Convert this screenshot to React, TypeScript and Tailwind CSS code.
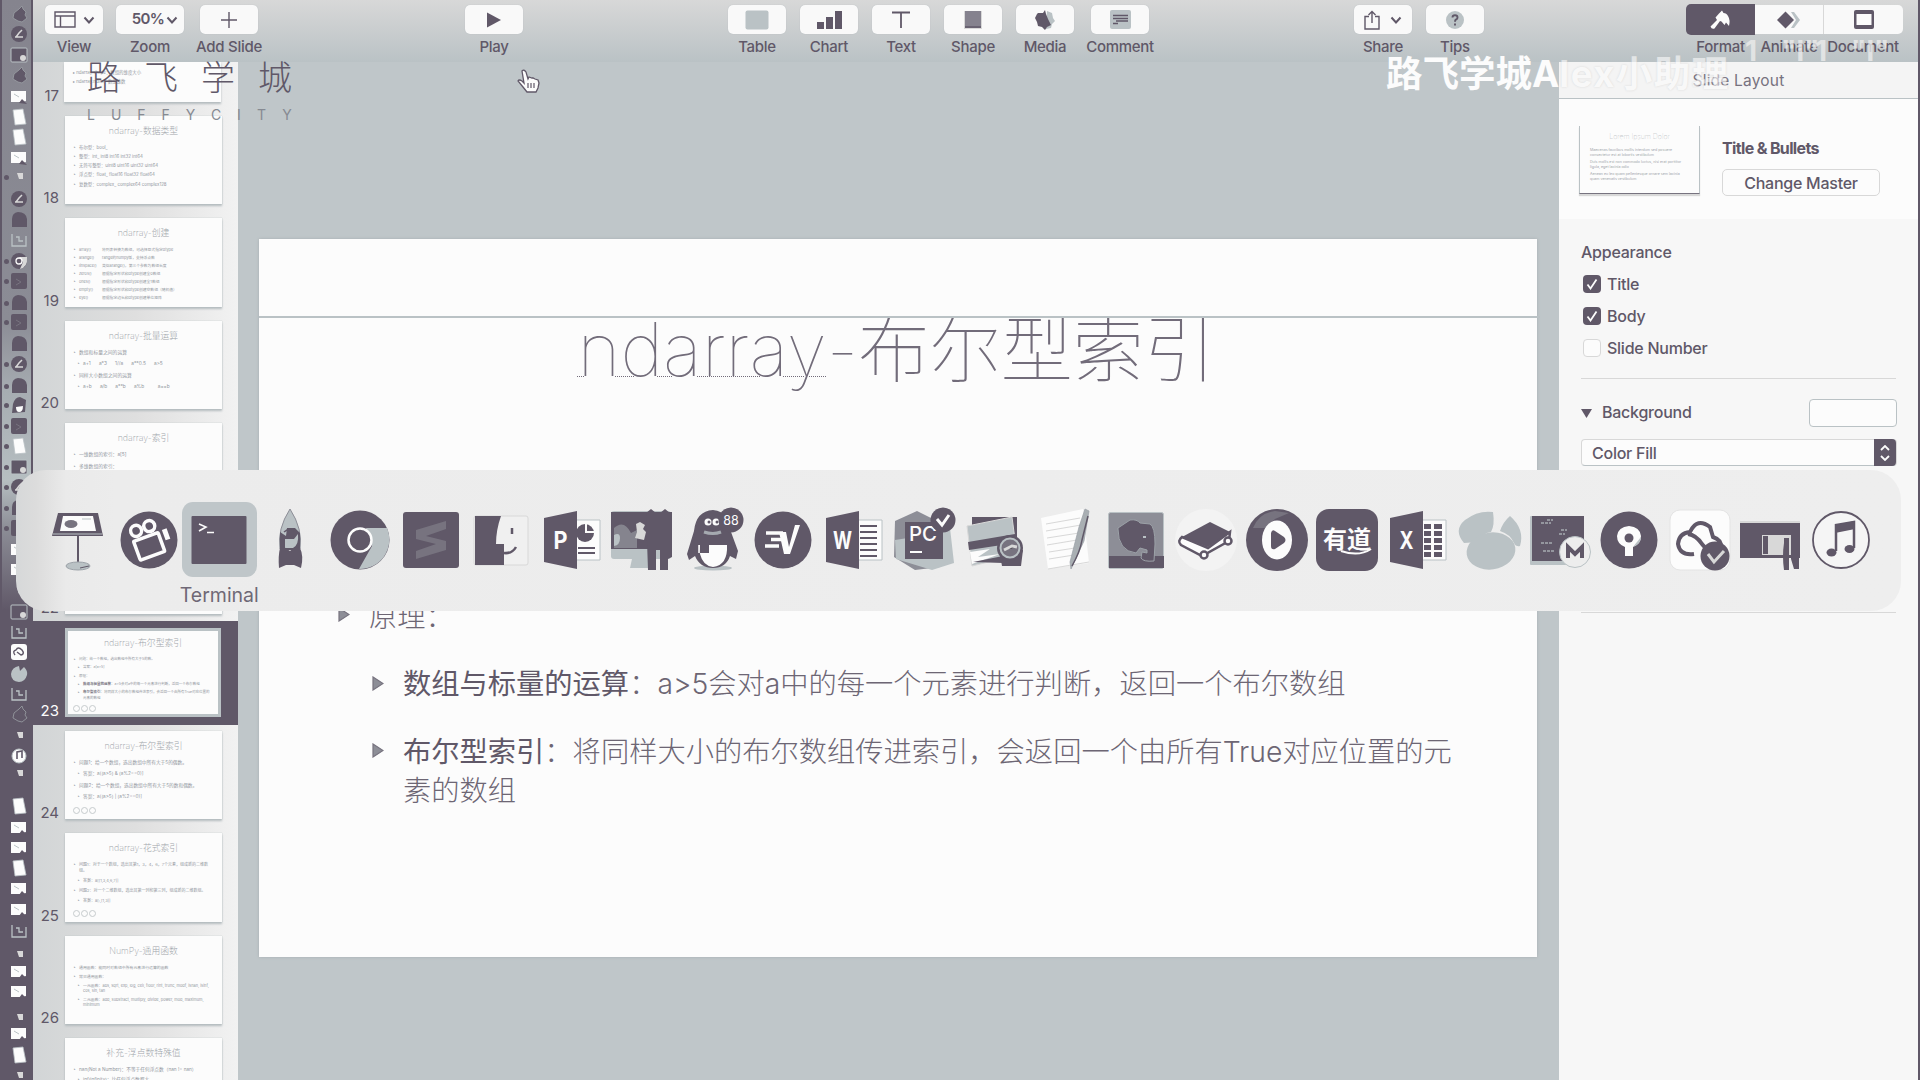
import React from "react";
import type { ReactNode } from "react";

const D = "#605868";
const G = "#bac2c5";
const L = "#d8d8d8";
const W = "#fcfcfc";

/* ---------- Toolbar ---------- */

function ToolButton({ label, width = "w-[58px]", children }: { label: string; width?: string; children: ReactNode }) {
  return (
    <div className={`flex flex-col items-center ${width}`}>
      <div className="flex h-[29px] w-full items-center justify-center rounded-[5px] bg-[#f9f9f9] shadow-[0_0_1px_#a8b0b4]">
        {children}
      </div>
      <ToolLabel>{label}</ToolLabel>
    </div>
  );
}

function ToolLabel({ children }: { children: ReactNode }) {
  return <span className="mt-[3px] whitespace-nowrap text-[15px] font-medium leading-[20px] tracking-[-0.28px]">{children}</span>;
}

function Chevron() {
  return (
    <svg width="12" height="10" viewBox="0 0 12 10">
      <path d="M1.5 2.5 L6 7.5 L10.5 2.5" fill="none" stroke={D} strokeWidth="2" />
    </svg>
  );
}

function Toolbar() {
  return (
    <header className="flex h-[62px] shrink-0 bg-gradient-to-b from-[#d8d8d8] to-[#bac2c5] pl-[12px] pr-[15px] pt-[5px]">
      <ToolButton label="View">
        <svg width="22" height="17" viewBox="0 0 22 17" className="mr-[7px]">
          <path d="M1 1h20v15H1zM1 5h20M6.500 5v11" fill="none" stroke={D} strokeWidth="1.4" />
        </svg>
        <Chevron />
      </ToolButton>
      <div className="w-[13px]" />
      <ToolButton label="Zoom" width="w-[68px]">
        <span className="ml-[10px] mr-[2px] text-[15px] font-semibold tracking-[-0.7px]">50%</span>
        <Chevron />
      </ToolButton>
      <div className="w-[16px]" />
      <ToolButton label="Add Slide">
        <svg width="16" height="16" viewBox="0 0 16 16">
          <path d="M8 0v16M0 8h16" stroke={D} strokeWidth="1.4" />
        </svg>
      </ToolButton>
      <div className="w-[207px]" />
      <ToolButton label="Play">
        <svg width="14" height="16" viewBox="0 0 14 16">
          <path d="M0 0.500 L14 8 L0 15.500z" fill={D} />
        </svg>
      </ToolButton>
      <div className="w-[205px]" />
      <div className="flex gap-[14px]">
        <ToolButton label="Table">
          <svg width="24" height="20" viewBox="0 0 24 20">
            <rect x="0.500" y="0.500" width="23" height="19" rx="2" fill={G} />
          </svg>
        </ToolButton>
        <ToolButton label="Chart">
          <svg width="25" height="18" viewBox="0 0 25 18">
            <path d="M0 11h7v7H0zM9 6h7v12H9zM18 0h7v18h-7z" fill={D} />
          </svg>
        </ToolButton>
        <ToolButton label="Text">
          <svg width="18" height="18" viewBox="0 0 18 18">
            <path d="M0 1.500h18M9 1.500V17" stroke={D} strokeWidth="1.8" />
          </svg>
        </ToolButton>
        <ToolButton label="Shape">
          <svg width="18" height="19" viewBox="0 0 18 19">
            <rect width="18" height="18" y="1" fill={L} />
            <rect x="1" y="1" width="16" height="17" fill="#85828e" />
            <path d="M1 17h16" stroke={D} strokeWidth="1.500" />
          </svg>
        </ToolButton>
        <ToolButton label="Media">
          <svg width="20" height="20" viewBox="0 0 20 20">
            <path d="M12 1l5 2 1 5 2 3-3 3-1 4-5 1z" fill={G} />
            <path d="M3 3l5 0 2-3 1 4 2 5 3 6-4 2-2 3-3-3-4-1-1-4-2-4 2-4z" fill={D} />
          </svg>
        </ToolButton>
        <div className="w-[3px]" />
        <div className="-ml-[14px]">
          <ToolButton label="Comment">
            <svg width="21" height="19" viewBox="0 0 21 19">
              <rect width="21" height="19" rx="2" fill={G} />
              <path d="M3 5.500h15M3 8.500h15M6 11h12M3 13.500h5" stroke={D} strokeWidth="1.3" />
            </svg>
          </ToolButton>
        </div>
      </div>
      <div className="flex-1" />
      <div className="mr-[202px] flex gap-[14px]">
        <ToolButton label="Share">
          <svg width="16" height="20" viewBox="0 0 16 20" className="mr-[10px]">
            <path d="M5 6.500H1V19h14V6.500h-4M8 13V2M4.500 5L8 1.500L11.500 5" fill="none" stroke={D} strokeWidth="1.4" />
          </svg>
          <Chevron />
        </ToolButton>
        <ToolButton label="Tips">
          <svg width="18" height="18" viewBox="0 0 18 18">
            <circle cx="9" cy="9" r="9" fill={G} />
            <path d="M6.500 6.500q0-2.300 2.500-2.300t2.500 2.200q0 1.300-1.300 2t-1.200 2.300M9 12.500v2" fill="none" stroke={D} strokeWidth="1.9" />
          </svg>
        </ToolButton>
      </div>
      <div className="flex">
        <div className="flex w-[69px] flex-col items-center">
          <div className="-mt-[1px] mb-[-1px] flex h-[31px] w-full shrink-0 items-center justify-center rounded-l-[5px] bg-[#605868]">
            <svg width="22" height="20" viewBox="0 0 22 20">
              <path d="M9 3.500l3-3 1.500 2.500q3 0 4.500 3 2.500 4 1 10l-3-3.500-1.500 2.500-3-3.500-1.500-.5-5.500 7.500q-3 1-4-2l6.500-6.500-1.500-2.500z" fill={W} />
            </svg>
          </div>
          <ToolLabel>Format</ToolLabel>
        </div>
        <div className="flex w-[68px] flex-col items-center">
          <div className="flex h-[29px] w-full items-center justify-center bg-[#f9f9f9]">
            <svg width="24" height="18" viewBox="0 0 24 18">
              <path d="M14 1h3l6 8-6 8h-3l5-8z" fill={G} />
              <path d="M8.500 0.500l8.500 8.500-8.500 8.500L0 9z" fill={D} />
            </svg>
          </div>
          <ToolLabel>Animate</ToolLabel>
        </div>
        <div className="flex w-[80px] flex-col items-center">
          <div className="flex h-[29px] w-full items-center justify-center rounded-r-[5px] border-l border-[#d8d8d8] bg-[#f9f9f9]">
            <svg width="20" height="19" viewBox="0 0 20 19">
              <rect width="20" height="19" rx="2" fill={D} />
              <rect x="2.500" y="4" width="15" height="11" fill={W} />
            </svg>
          </div>
          <ToolLabel>Document</ToolLabel>
        </div>
      </div>
    </header>
  );
}

/* ---------- Slide navigator ---------- */

type Line = { t: string; i?: number; h: number; b?: string; col?: string };
type Thumb = { n: number; title: string; lines: Line[]; transition?: boolean; size?: number };

const thumbs: Thumb[] = [
  {
    n: 18, title: "ndarray-数据类型", size: 4.4,
    lines: [
      { t: "布尔型：bool_", h: 9.3 },
      { t: "整型：int_ int8 int16 int32 int64", h: 9.3 },
      { t: "无符号整型：uint8 uint16 uint32 uint64", h: 9.3 },
      { t: "浮点型：float_ float16 float32 float64", h: 9.3 },
      { t: "复数型：complex_ complex64 complex128", h: 9.3 },
    ],
  },
  {
    n: 19, title: "ndarray-创建", size: 3.8,
    lines: [
      { t: "array()", col: "将列表转换为数组，可选择显式指定dtype", h: 8 },
      { t: "arange()", col: "range的numpy版，支持浮点数", h: 8 },
      { t: "linspace()", col: "类似arange()，第三个参数为数组长度", h: 8 },
      { t: "zeros()", col: "根据指定形状和dtype创建全0数组", h: 8 },
      { t: "ones()", col: "根据指定形状和dtype创建全1数组", h: 8 },
      { t: "empty()", col: "根据指定形状和dtype创建空数组（随机值）", h: 8 },
      { t: "eye()", col: "根据指定边长和dtype创建单位矩阵", h: 8 },
    ],
  },
  {
    n: 20, title: "ndarray-批量运算", size: 4.8,
    lines: [
      { t: "数组和标量之间的运算", h: 11.5 },
      { t: "a+1      a*3      1//a      a**0.5      a>5", i: 1, h: 11.5 },
      { t: "同样大小数组之间的运算", h: 11.5 },
      { t: "a+b      a/b      a**b      a%b          a==b", i: 1, h: 11.5 },
    ],
  },
  {
    n: 21, title: "ndarray-索引", size: 4.8,
    lines: [
      { t: "一维数组的索引：a[5]", h: 11.5 },
      { t: "多维数组的索引：", h: 11.5 },
    ],
  },
  {
    n: 22, title: "ndarray-切片", size: 4.4,
    lines: [{ t: "一维数组的切片：a[5:8]", h: 11.5 }],
  },
  {
    n: 23, title: "ndarray-布尔型索引", transition: true, size: 3.5,
    lines: [
      { t: "问题：给一个数组，选出数组中所有大于5的数。", h: 8.2 },
      { t: "答案：a[a>5]", i: 1, h: 8.2 },
      { t: "原理：", h: 8.2 },
      { t: "：a>5会对a中的每一个元素进行判断，返回一个布尔数组", b: "数组与标量的运算", i: 1, h: 8.2 },
      { t: "：将同样大小的布尔数组传进索引，会返回一个由所有True对应位置的元素的数组", b: "布尔型索引", i: 1, h: 8.2 },
    ],
  },
  {
    n: 24, title: "ndarray-布尔型索引", transition: true, size: 4.7,
    lines: [
      { t: "问题1：给一个数组，选出数组中所有大于5的偶数。", h: 11.5 },
      { t: "答案：a[(a>5) & (a%2==0)]", i: 1, h: 11.5 },
      { t: "问题2：给一个数组，选出数组中所有大于5的数和偶数。", h: 11.5 },
      { t: "答案：a[(a>5) | (a%2==0)]", i: 1, h: 11.5 },
    ],
  },
  {
    n: 25, title: "ndarray-花式索引", transition: true, size: 4,
    lines: [
      { t: "问题1：对于一个数组，选出其第1，3，4，6，7个元素，组成新的二维数组。", h: 15.5 },
      { t: "答案：a[[1,3,4,6,7]]", i: 1, h: 10 },
      { t: "问题2：对一个二维数组，选出其第一列和第三列，组成新的二维数组。", h: 10 },
      { t: "答案：a[:,[1,3]]", i: 1, h: 10 },
    ],
  },
  {
    n: 26, title: "NumPy-通用函数", size: 3.9,
    lines: [
      { t: "通用函数：能同时对数组中所有元素进行运算的函数", h: 9 },
      { t: "常见通用函数：", h: 9 },
      { t: "一元函数：abs, sqrt, exp, log, ceil, floor, rint, trunc, modf, isnan, isinf, cos, sin, tan", i: 1, h: 14 },
      { t: "二元函数：add, substract, multiply, divide, power, mod, maximum, minimum", i: 1, h: 14 },
    ],
  },
  {
    n: 27, title: "补充-浮点数特殊值", size: 4.7,
    lines: [
      { t: "nan(Not a Number)：不等于任何浮点数（nan != nan）", h: 10 },
      { t: "inf(infinity)：比任何浮点数都大", i: 1, h: 10 },
    ],
  },
];

function ThumbBody({ thumb }: { thumb: Thumb }) {
  return (
    <div className="relative h-full w-full overflow-hidden text-[#92979e]">
      <div className="pt-[9px] text-center text-[8.8px] font-extralight leading-[12px] text-[#9ea5aa]">{thumb.title}</div>
      <div className="pl-[9px] pr-[10px] pt-[8px]" style={{ fontSize: thumb.size }}>
        {thumb.lines.map((l, k) => (
          <div key={k} className="flex gap-[3px] whitespace-pre-wrap leading-[5.5px]" style={{ height: l.h, paddingLeft: (l.i ?? 0) * 4 }}>
            <span className="text-[3px]">▸</span>
            {l.col ? (
              <>
                <span className="w-[20px]">{l.t}</span>
                <span>{l.col}</span>
              </>
            ) : (
              <span>
                {l.b && <b className="text-[#77737f]">{l.b}</b>}
                {l.t}
              </span>
            )}
          </div>
        ))}
      </div>
      {thumb.transition && (
        <div className="absolute bottom-[5px] left-[8px] flex gap-[1px]">
          <i className="size-[7px] rounded-full border border-[#c6cbcd]" />
          <i className="size-[7px] rounded-full border border-[#c6cbcd]" />
          <i className="size-[7px] rounded-full border border-[#c6cbcd]" />
        </div>
      )}
    </div>
  );
}

function Navigator() {
  return (
    <nav className="h-full w-[205px] shrink-0 overflow-hidden bg-gradient-to-r from-[#d2d5d6] via-[#dfdfdf] to-[#f2f2f2]">
      <div className="flex h-[47px] items-start">
        <span className="w-[26px] pt-[23px] text-right text-[15px] leading-[22px]">17</span>
        <div className="ml-[5px] h-[40px] w-[157px] bg-[#fcfcfc] pl-[9px] pt-[6px] text-[4.4px] leading-[9px] text-[#92979e] shadow-[0_2px_2px_#b4bcbf]">
          <div>▸ ndarray.shape：数组的维度大小</div>
          <div>▸ ndarray.ndim：数组维数</div>
        </div>
      </div>
      {thumbs.map((t) => {
        const active = t.n === 23;
        return (
          <div
            key={t.n}
            className={
              active
                ? "flex h-[102.5px] items-center bg-[#605868] text-[#fcfcfc] shadow-[0_0_0_1px_#605868]"
                : "flex h-[102.5px] items-center pb-[1px]"
            }
          >
            <span className="w-[26px] pt-[77px] text-right text-[15px] leading-[22px]">{t.n}</span>
            <div
              className={
                active
                  ? "ml-[6px] h-[89px] w-[156px] border-[3px] border-[#bac2c5] bg-[#fcfcfc]"
                  : "ml-[6px] h-[88.5px] w-[157px] bg-[#fcfcfc] shadow-[0_2px_2px_#b4bcbf,0_0_1px_#b4bcbf]"
              }
            >
              <div className={active ? "-m-[3px] h-[89px] w-[156px]" : "h-full"}>
                <ThumbBody thumb={t} />
              </div>
            </div>
          </div>
        );
      })}
    </nav>
  );
}

/* ---------- Slide canvas ---------- */

function Bullet() {
  return (
    <div className="flex h-[39px] items-center pt-[5px]">
      <svg width="12" height="15" viewBox="0 0 12 15" className="shrink-0">
        <path d="M1 1l10 6.500L1 14z" fill="#8d8e97" stroke="#77737f" strokeWidth="1.2" />
      </svg>
    </div>
  );
}

function Canvas() {
  return (
    <main className="h-full w-[1321px] shrink-0 bg-[#bfc6c9] pl-[21px] pt-[177px]">
      <div className="h-[718px] w-[1278px] bg-[#fcfcfc] shadow-[0_0_3px_#a7afb3]">
        <div className="-mr-[3px] h-[79px] border-b-2 border-[#bac2c5]" />
        <div className="flex h-[123px] justify-center overflow-hidden">
          <h1 className="-mt-[14px] ml-[-3px] whitespace-nowrap text-[71.5px] font-thin leading-[92px] text-[#726c7a]">
            <span className="text-[73.5px] underline decoration-dotted decoration-1 underline-offset-[0px]">ndarray</span>-布尔型索引
          </h1>
        </div>
        <div className="pt-[153px] text-[28.27px] font-light leading-[39px] text-[#6d6674]">
          <div className="flex h-[67px] items-start gap-[19px] pl-[79px]">
            <div className="-mt-[2px]"><Bullet /></div>
            <span className="pt-[4px]">原理：</span>
          </div>
          <div className="flex h-[67px] items-start gap-[19px] pl-[113px]">
            <Bullet />
            <span className="pt-[4px]"><b className="text-[#605868]">数组与标量的运算</b>：a&gt;5会对a中的每一个元素进行判断，返回一个布尔数组</span>
          </div>
          <div className="flex items-start gap-[19px] pl-[113px]">
            <Bullet />
            <span className="whitespace-nowrap pt-[5px]">
              <b className="text-[#605868]">布尔型索引</b>：将同样大小的布尔数组传进索引，会返回一个由所有True对应位置的元<br />素的数组
            </span>
          </div>
        </div>
      </div>
    </main>
  );
}

/* ---------- Inspector ---------- */

function Check({ label, on }: { label: string; on: boolean }) {
  return (
    <div className="flex h-[32px] items-center gap-[6px] pl-[2px]">
      <div className={on ? "flex size-[18px] items-center justify-center rounded-[4px] bg-[#605868]" : "size-[18px] rounded-[4px] border border-[#d8d8d8] bg-[#fcfcfc]"}>
        {on && (
          <svg width="12" height="12" viewBox="0 0 12 12">
            <path d="M1.500 6.500l3 4L10.500 1.500" fill="none" stroke={W} strokeWidth="1.8" />
          </svg>
        )}
      </div>
      <span>{label}</span>
    </div>
  );
}

function Inspector() {
  return (
    <aside className="flex h-full w-[359px] shrink-0 flex-col bg-[#f7f7f7] text-[16px] font-medium tracking-[-0.25px]">
      <div className="flex h-[37px] items-center justify-center border-b border-[#bac2c5] bg-[#f4f4f4] pt-[1px] text-[15.5px] font-normal tracking-[0.2px] text-[#77727f]">Slide Layout</div>
      <div className="flex h-[120px] bg-[#fcfcfc] pl-[20px] pt-[27px]">
        <div className="h-[68px] w-[121px] border border-t-0 border-[#bac2c5] border-b-[#77737f] bg-[#fcfcfc] text-[3.6px] font-normal leading-[5px] tracking-normal text-[#a0a5aa] shadow-[0_2px_1px_#d8d8d8]">
          <div className="pb-[7px] pt-[6px] text-center text-[7px] font-thin leading-[9px]">Lorem Ipsum Dolor</div>
          <div className="h-[12px] px-[10px]">Maecenas faucibus mollis interdum sed posuere consectetur est at lobortis vestibulum</div>
          <div className="h-[12px] px-[10px]">Duis mollis est non commodo luctus, nisi erat porttitor ligula, eget lacinia odio</div>
          <div className="h-[12px] px-[10px]">Aenean eu leo quam pellentesque ornare sem lacinia quam venenatis vestibulum</div>
        </div>
        <div className="ml-[22px] pt-[11px]">
          <div className="font-bold leading-[22px] tracking-[-0.65px]">Title &amp; Bullets</div>
          <div className="mt-[10px] flex h-[27px] w-[158px] items-center justify-center rounded-[5px] border border-[#d8d8d8] bg-[#fcfcfc]">Change Master</div>
        </div>
      </div>
      <div className="pl-[22px] pr-[22px]">
        <div className="flex h-[49px] items-end pb-[4px]">Appearance</div>
        <Check label="Title" on />
        <Check label="Body" on />
        <Check label="Slide Number" on={false} />
        <div className="mt-[14px] h-px bg-[#d8d8d8]" />
        <div className="mt-[20px] flex h-[28px] items-center">
          <svg width="11" height="9" viewBox="0 0 11 9"><path d="M0 0h11L5.500 9z" fill={D} /></svg>
          <span className="ml-[10px] pb-[3px]">Background</span>
          <div className="-mr-[1px] ml-auto h-[28px] w-[88px] rounded-[4px] border border-[#bac2c5] bg-[#fcfcfc]" />
        </div>
        <div className="-mr-[1px] mt-[12px] flex h-[27px] items-center rounded-[4px] border border-[#d8d8d8] border-b-[#bac2c5] bg-[#fcfcfc] pl-[10px]">
          Color Fill
          <div className="ml-auto flex h-[27px] w-[22px] items-center justify-center rounded-r-[4px] bg-[#605868]">
            <svg width="10" height="16" viewBox="0 0 10 16"><path d="M1 5l4-4 4 4M1 11l4 4 4-4" fill="none" stroke={W} strokeWidth="1.8" /></svg>
          </div>
        </div>
        <div className="mt-[146px] h-px bg-[#d8d8d8]" />
      </div>
    </aside>
  );
}

/* ---------- Desktop dock strip ---------- */

type Kind = "apple" | "round" | "square" | "paper" | "blob" | "doc" | "window" | "chrome" | "penguin" | "cloud" | "pie" | "note" | "tiny" | "lbox";
const strip: [number, Kind, boolean][] = [
  [14, "apple", false], [34, "round", false], [55, "window", false], [75, "apple", false], [97, "doc", false],
  [117, "paper", false], [137, "paper", false], [158, "doc", false], [177, "tiny", true], [199, "round", false],
  [220, "blob", false], [240, "lbox", false], [261, "chrome", true], [281, "square", true], [303, "blob", true],
  [322, "square", true], [344, "blob", false], [364, "round", true], [386, "blob", true], [405, "penguin", true],
  [426, "square", true], [446, "paper", true], [467, "window", true], [487, "round", true], [508, "blob", true],
  [528, "square", true], [550, "doc", false], [570, "doc", false], [592, "tiny", false], [612, "window", false],
  [632, "lbox", false], [652, "cloud", false], [674, "pie", false], [694, "lbox", false], [714, "apple", false],
  [736, "tiny", false], [756, "note", false], [774, "tiny", false], [806, "paper", false], [828, "doc", false],
  [848, "doc", false], [868, "paper", false], [889, "doc", false], [910, "doc", false], [931, "lbox", false],
  [955, "tiny", false], [972, "doc", false], [992, "doc", false], [1018, "tiny", false], [1034, "doc", false],
  [1055, "paper", false], [1076, "tiny", false],
];

function StripIcon({ kind }: { kind: Kind }) {
  switch (kind) {
    case "round":
      return <><circle cx="9" cy="9" r="8" fill={D} /><path d="M6 12l3-4 3-3M5 12h8" stroke={L} strokeWidth="1.5" fill="none" /></>;
    case "square":
      return <><rect x="1" y="1" width="16" height="16" rx="2" fill={D} /><path d="M6 7l5 3-5 3" stroke="#77737f" fill="none" /></>;
    case "window":
      return <><rect x="1" y="2" width="16" height="14" rx="1" fill={D} stroke={G} /><circle cx="13" cy="12" r="3" fill={L} /></>;
    case "lbox":
      return <path d="M2 3v12h14V5M6 6h3v4h4" fill="none" stroke={G} strokeWidth="1.3" />;
    case "paper":
      return <path d="M3 2l10-1 3 15-11 1z" fill={W} stroke={G} strokeWidth=".8" />;
    case "doc":
      return <><path d="M1 3h15v10l-4 1H1z" fill={W} /><path d="M9 15l3-4 5 5z" fill={D} /><path d="M4 6l5 3" stroke={G} /></>;
    case "blob":
      return <path d="M2 16V8q0-6 6-7 8 0 9 7v8z" fill={D} />;
    case "chrome":
      return <><circle cx="9" cy="9" r="8" fill={D} /><path d="M9 5h8q1 10-7 12l3-7z" fill={L} /><circle cx="9" cy="9" r="3" fill={D} stroke={W} strokeWidth="1.3" /></>;
    case "penguin":
      return <><path d="M2 17l1-9q2-7 7-7l6 3-1 12z" fill={D} /><path d="M6 11l7-1q0 6-4 6-3 0-3-5z" fill={W} /></>;
    case "cloud":
      return <><rect x="1" y="1" width="16" height="16" rx="3" fill={W} /><path d="M5 12q-3-4 1-5 2-4 6 0 3 4-1 5l-4-3" fill="none" stroke={D} strokeWidth="1.4" /></>;
    case "pie":
      return <path d="M9 1l1 5 4-4q4 4 3 8-2 7-8 7-8-1-8-8 1-7 8-8z" fill={G} />;
    case "note":
      return <><circle cx="9" cy="9" r="7" fill={W} stroke={G} /><path d="M7 12V5l5-1v7" fill="none" stroke={D} strokeWidth="1.6" /></>;
    case "apple":
      return <path d="M9 4l3-3 1 3 3 3-1 3 2 3-5 4-4-1-5-3 1-5z" fill={D} stroke="#9b9fa5" strokeWidth=".8" />;
    default:
      return <path d="M7 5h6v6H9z" fill={L} />;
  }
}

function DesktopStrip() {
  return (
    <div className="flex h-full w-[33px] shrink-0 flex-col overflow-hidden border-l-2 border-r-2 border-[#605868] bg-[linear-gradient(to_bottom,#85848e_0px,#8b8c95_320px,#a6acb1_390px,#b6bec1_480px,#8b8c95_530px,#605868_610px,#605868_1080px)] pt-[5px]">
      {strip.map(([y, kind, dot], k) => {
        const next = k + 1 < strip.length ? strip[k + 1][0] : y + 20;
        return (
          <div key={k} className="flex shrink-0 items-start" style={{ height: next - y }}>
            <div className="flex h-[18px] w-[8px] items-center justify-center">{dot && <i className="size-[5px] rounded-full bg-[#605868]" />}</div>
            <svg width="18" height="18" viewBox="0 0 18 18" className="shrink-0"><StripIcon kind={kind} /></svg>
          </div>
        );
      })}
    </div>
  );
}

/* ---------- App switcher ---------- */

function office(letter: string, page: ReactNode) {
  return (
    <>
      <path d="M36 12h24v40H36z" fill={W} stroke={G} />
      {page}
      <path d="M4 10l33-7v58L4 54z" fill={D} />
      <text x="20.500" y="41" textAnchor="middle" fontSize="24" fontWeight="700" fill={W} fontFamily="Inter, sans-serif" textLength={letter === "W" ? 19 : 14} lengthAdjust="spacingAndGlyphs">{letter}</text>
    </>
  );
}

const apps: { name: string; art: ReactNode }[] = [
  { name: "Keynote", art: <>
    <path d="M32 28v30" stroke={D} strokeWidth="2" /><ellipse cx="32" cy="58" rx="12" ry="4" fill={G} stroke="#9ca2a8" /><path d="M34 60l9-2" stroke={D} />
    <path d="M12 5h40l5 23H6z" fill={D} /><path d="M17 8h30l3 15H14z" fill={W} /><ellipse cx="25" cy="16" rx="6.500" ry="4" fill="#77737f" /><path d="M36 11h9M7 26h49" stroke={G} />
  </> },
  { name: "Screen Recorder", art: <>
    <circle cx="32" cy="32" r="28.500" fill={D} /><g transform="rotate(-20 32 32)" fill="none" stroke={W} strokeWidth="3.500"><rect x="17" y="28" width="26" height="20" rx="1" /><circle cx="23" cy="19" r="5.500" /><circle cx="37" cy="19" r="5.500" /><path d="M50 27v11" strokeWidth="5" /></g>
  </> },
  { name: "Terminal", art: <>
    <rect x="4.500" y="8" width="55" height="48" rx="1" fill={D} /><path d="M12 16l7 3-7 4M20 24.500h7" stroke={W} fill="none" strokeWidth="1.600" />
  </> },
  { name: "Rocket", art: <>
    <path d="M32 1q13 20 10 40H22Q19 21 32 1z" fill={G} stroke="#8d8e97" /><path d="M22 24l6 4 1-8h8l5 5v17H22z" fill={D} /><path d="M26 24q7-6 12 0" stroke={D} strokeWidth="1.500" fill="none" /><path d="M27 31h9l4-5q1 11-5 14h-8z" fill={G} /><path d="M22 40q-2 8-1 20l7-3h8l7 3q3-12-1-20l-5-1-5 4-6-4z" fill={D} />
  </> },
  { name: "Chrome", art: <>
    <circle cx="32" cy="32" r="29.500" fill={D} /><path d="M38 20h21a29.500 29.500 0 0 1-28 41l13-23z" fill={G} /><circle cx="32" cy="32" r="11.500" fill={D} stroke={W} strokeWidth="2.500" />
  </> },
  { name: "Sublime Text", art: <>
    <rect x="4" y="4" width="56" height="56" rx="3" fill={D} /><path d="M17 22l30-9v8l-20 7 20 5v9l-30 9v-8l20-7-20-5z" fill="#77737f" />
  </> },
  { name: "Finder", art: <>
    <rect x="5" y="8" width="54" height="49" rx="2" fill="#f0f0f0" stroke={L} /><path d="M6 8h26q-5 14-5 28h8v21H6z" fill={D} /><path d="M43 20v6M35 45q8 1 12-6" stroke={D} strokeWidth="2.500" fill="none" />
  </> },
  { name: "PowerPoint", art: office("P", <><circle cx="45" cy="25" r="9" fill={D} /><path d="M46 15v9h9" stroke={W} strokeWidth="2" fill="none" /><path d="M38 40h17M38 45h17" stroke={D} strokeWidth="2" /></>) },
  { name: "Virtual Machine", art: <>
    <rect x="1" y="3" width="60" height="48" rx="3" fill={G} /><path d="M22 51h20v9H20z" fill={G} /><path d="M1 4h61v37H1z" fill={D} /><path d="M4 40V20q10-9 17 5l6-3v18z" fill="#85848e" /><path d="M4 38V27q6-3 6 3 0 7-6 8z" fill={G} /><path d="M26 16l4-2 5 3-2 4 3 3-2 8-9-2 2-6z" fill={L} />
    <path d="M36 5l5-4 5 4h4l5-4 5 4 2 8v36l-4 2v11h-8V42h-4v20h-8z" fill={D} />
  </> },
  { name: "QQ", art: <g transform="translate(1 0)">
    <ellipse cx="31" cy="60" rx="19" ry="2.500" fill={G} /><path d="M12 23q2-20 19-21 18 2 18 22l7 19-2 8-6-3q-4 12-17 12T13 48l-6 4-2-6z" fill={D} /><path d="M17 37h10v9h-9zM27 37h18q1 20-14 22-10-1-13-13h9z" fill={W} /><path d="M18 37v8h9v-8z" fill={D} /><path d="M17 37v8" stroke={W} strokeWidth="1.5" /><circle cx="26" cy="14" r="3.500" fill={W} /><circle cx="34" cy="14" r="3.500" fill={W} /><circle cx="27" cy="14" r="1.500" fill={D} /><circle cx="35" cy="14" r="1.500" fill={D} /><path d="M22 24q9 3 17 0" stroke="#a5aab0" strokeWidth="3" fill="none" />
    <circle cx="49" cy="12" r="12.500" fill={D} /><text x="49" y="16.500" textAnchor="middle" fontSize="12.500" fill={W} fontFamily="Inter, sans-serif">88</text>
  </g> },
  { name: "ExpressVPN", art: <>
    <circle cx="32" cy="32" r="28.500" fill={D} /><path d="M15 25h17M20 31.500h11M14 38h14" stroke={W} strokeWidth="3.500" /><path d="M28 24h7l3 15 6-22h5L39 46h-6z" fill={W} />
  </> },
  { name: "Word", art: office("W", <path d="M38 18h17M38 24h17M38 30h17M38 36h17M38 42h17M38 48h17" stroke={D} strokeWidth="2" />) },
  { name: "PyCharm", art: <>
    <path d="M3 13l22-10 28 14-5 42-25 3L2 49z" fill="#8d8e97" /><path d="M3 32l45-7 10-5 4 35-22 7-36-11z" fill={G} /><rect x="13" y="14" width="38" height="37" fill={D} /><text x="31" y="33" textAnchor="middle" fontSize="20" fontWeight="500" fill={W} fontFamily="Inter, sans-serif" textLength="28" lengthAdjust="spacingAndGlyphs">PC</text><path d="M18 44h12" stroke={W} strokeWidth="2" />
    <circle cx="51" cy="12" r="12.500" fill={D} /><path d="M45 11l5 6 7-10" stroke={W} strokeWidth="3" fill="none" />
  </> },
  { name: "Preview", art: <g transform="translate(1 0)">
    <path d="M8 9h45v36H8z" fill={D} /><path d="M3 18l45-9 5 38-45 11z" fill={G} stroke={L} /><path d="M4 34l47-8v9L5 42z" fill={D} /><path d="M6 44l20-3-12 8 22-3-28 10z" fill={W} /><path d="M9 54l30-6v7z" fill={D} />
    <path d="M35 42h24l-2 16H38z" fill={D} /><circle cx="46" cy="40" r="13" fill={D} /><circle cx="46" cy="40" r="9.500" fill="#77737f" stroke={G} strokeWidth="2" /><path d="M40 42l8-4 5 1" stroke={L} strokeWidth="3" />
  </g> },
  { name: "TextEdit", art: <g transform="translate(5 0)">
    <path d="M3 10l42-9 6 54-41 6z" fill={W} /><path d="M8 16l34-6M8 23l35-6M9 30l32-5M9 37l30-5M11 44l26-4M11 51l25-4M10 61l41-7" stroke={L} strokeWidth="1.200" /><path d="M47 1l4 2-5 30-13 28-1-7 9-35z" fill="#a9afb3" stroke="#9a9fa6" strokeWidth=".7" /><path d="M34 58q8-14 10-26l6-24" stroke={D} strokeWidth="1.500" fill="none" />
  </g> },
  { name: "Evernote", art: <>
    <rect x="4.500" y="4.500" width="55" height="56" rx="2" fill="#8d8e97" stroke={G} /><path d="M5 48h55v12H5z" fill={D} /><path d="M14 20l12-8q7-1 10 3l10 1q5 3 5 20l-1 17q-11 1-13-3l1-6 5 1v-3l-7-2-4 5q-18-2-18-24z" fill={D} stroke="#9ca2a8" /><path d="M39 29h3" stroke={G} strokeWidth="2" />
  </> },
  { name: "Kindle Library", art: <>
    <circle cx="32" cy="32" r="31" fill="#f3f3f3" /><path d="M8 29l28-15 20 10-22 15z" fill={D} /><path d="M8 29q-5 4-1 8l21 11 27-15 1-9-22 16z" fill={W} stroke={D} strokeWidth="2.500" /><circle cx="30" cy="47" r="3.500" fill={W} stroke={D} strokeWidth="2.500" /><circle cx="54" cy="33" r="3.500" fill={W} stroke={D} strokeWidth="2.500" />
  </> },
  { name: "Player", art: <>
    <circle cx="32" cy="32" r="31" fill={D} /><path d="M8 20Q14 5 30 3l14 2-14 6-10 9z" fill="#77737f" /><ellipse cx="32" cy="32" rx="15" ry="19.500" fill={W} /><path d="M26 25q1-4 4-2l9 6q3 3 0 6l-9 6q-4 1-4-3z" fill={D} />
  </> },
  { name: "Youdao Dictionary", art: <>
    <rect x="1" y="1" width="62" height="62" rx="13" fill={D} /><text x="32" y="40" textAnchor="middle" fontSize="24" fontWeight="700" fill={W} fontFamily="'Noto Sans CJK SC', sans-serif">有道</text><path d="M26 43q18 6 30-2" stroke={W} strokeWidth="2" fill="none" />
  </> },
  { name: "Excel", art: office("X", <path d="M38 16h7v5h-7zM48 16h8v5h-8zM38 23h7v5h-7zM48 23h8v5h-8zM38 30h7v5h-7zM48 30h8v5h-8zM38 37h7v5h-7zM48 37h8v5h-8zM38 44h7v5h-7zM48 44h8v5h-8z" fill={D} />) },
  { name: "Mindmap", art: <>
    <path d="M37 4q2 13-2 20-9 1-12 10l-15 1Q-3 22 9 12 22 2 37 4zM54 8q15 13 10 30-4 1-6-3-4-9-14-12 3-9 10-15z" fill={G} /><ellipse cx="35" cy="43" rx="24.500" ry="18.500" fill={G} transform="rotate(-8 35 43)" />
  </> },
  { name: "Code Editor", art: <>
    <rect x="3" y="8" width="54" height="49" rx="1" fill={G} /><path d="M5 8h52v45H5z" fill={D} /><path d="M14 15h10M20 12h6M34 22h6M32 26h6M14 35h12M16 43h12" stroke="#a5aab0" strokeWidth="1.500" strokeDasharray="3 1" />
    <circle cx="48" cy="44" r="15.500" fill="#ededed" stroke={G} /><path d="M41 50V39l7 7 7-7v11" stroke={D} strokeWidth="4" fill="none" />
  </> },
  { name: "SourceTree", art: <>
    <circle cx="32" cy="32" r="28.500" fill={D} /><path d="M28 48V39q-8-3-8-11 1-9 12-10 11 1 12 10 0 8-8 11v9z" fill={W} /><circle cx="32" cy="30" r="4.500" fill={D} /><path d="M44 29q0 7-8 10z" fill={G} />
  </> },
  { name: "Cloud Drive", art: <>
    <rect x="2" y="2" width="60" height="60" rx="10" fill={W} stroke="#e4e4e4" /><path d="M26 46q-14 2-16-10 1-11 12-12 7-15 20-5l3 10q9 3 8 11M20 26q8 1 14 10l7 8" fill="none" stroke={D} strokeWidth="4" />
    <circle cx="47" cy="48" r="14.500" fill={D} /><path d="M40 46l6 8 10-11" stroke={L} strokeWidth="3" fill="none" />
  </> },
  { name: "Remote Desktop", art: <>
    <path d="M2 15h60v35H2z" fill={D} /><path d="M2 14h60" stroke={L} strokeWidth="2" /><path d="M24 27h30v20H24z" fill={L} /><path d="M25 28h5v18h-5z" fill={D} /><path d="M46 30h5v32h-5q-2-14 0-27zM53 15h8v46h-5l-3-10z" fill={D} />
  </> },
  { name: "iTunes", art: <>
    <circle cx="32" cy="32" r="28" fill="#f5f5f5" stroke={D} strokeWidth="1.800" /><path d="M27 43V17l18-3v26" stroke={D} strokeWidth="2.500" fill="none" /><path d="M26 17l20-4v8l-20 4z" fill={D} /><ellipse cx="22.500" cy="44.500" rx="5" ry="4" fill={D} /><ellipse cx="40.500" cy="41" rx="5" ry="4" fill={D} />
  </> },
];

function AppSwitcher() {
  return (
    <div className="absolute left-[16px] top-[470px] flex h-[141px] w-[1885px] rounded-[30px] bg-[linear-gradient(to_right,#d6d8d9_0px,#dcdcdc_20px,#eaeaea_50px,#ececec_100px,#eeeeee_100%)] pl-[27px] pt-[32px]">
      {apps.map((a) => {
        const on = a.name === "Terminal";
        return (
          <div key={a.name} className="flex w-[70.5px] shrink-0 flex-col items-center">
            <div className={on ? "flex h-[75px] w-[75px] items-center justify-center rounded-[11px] bg-[#bfc6c9]" : "flex h-[75px] items-center"}>
              <svg width="64" height="64" viewBox="0 0 64 64" className="overflow-visible">{a.art}</svg>
            </div>
            {on && <span className="mt-[6px] text-[19.5px] leading-[24px] text-[#6f6876]">{a.name}</span>}
          </div>
        );
      })}
    </div>
  );
}

/* ---------- Page ---------- */

export default function App() {
  return (
    <div className="relative flex h-[1080px] w-[1920px] overflow-hidden bg-[#bfc6c9] font-['Inter','Noto_Sans_CJK_SC',sans-serif] text-[#605868]">
      <DesktopStrip />
      <div className="flex h-full w-[1885px] shrink-0 flex-col">
        <Toolbar />
        <div className="flex h-[1018px]">
          <Navigator />
          <Canvas />
          <Inspector />
        </div>
      </div>
      <div className="h-full w-[2px] shrink-0 bg-[#605868]" />

      <AppSwitcher />

      <div className="absolute left-[87px] top-[57px] whitespace-nowrap">
        <div className="text-[34px] font-light leading-[42px] tracking-[23px]">路飞学城</div>
        <div className="mt-[8px] text-[14px] leading-[16px] tracking-[16px] text-[#868a92]">LUFFYCITY</div>
      </div>
      <div className="absolute left-[1386px] top-[50px] flex whitespace-nowrap text-[36.5px] font-bold leading-[48px] text-[#fcfcfc]">
        <span>路飞学城A</span>
        <span className="tracking-[1.5px] opacity-60 [text-shadow:0_0_2px_#c4c4c4]">lex小助理</span>
      </div>
      <div className="absolute left-[1745px] top-[36px] flex items-start text-[28px] font-bold leading-[30px] text-[#ececec]/80">
        <span className="w-[36px]">1</span>
        <span className="w-[34px]">"l"</span>
        <span className="w-[36px]">1</span>
        <span>"l"</span>
      </div>

      <svg className="absolute left-[517px] top-[69px]" width="23" height="25" viewBox="0 0 23 25">
        <path d="M5 2q2-2 4 1l2 7 1-2 3 1 1 0 2 1 3 1 1 3-1 5-2 4H10l-4-5-5-6q1-2 4 0l2 2z" fill={W} stroke={D} strokeWidth="1.300" />
        <path d="M11 14v5M14 14v5M17 14v5" stroke={D} strokeWidth="1.200" />
      </svg>
    </div>
  );
}
